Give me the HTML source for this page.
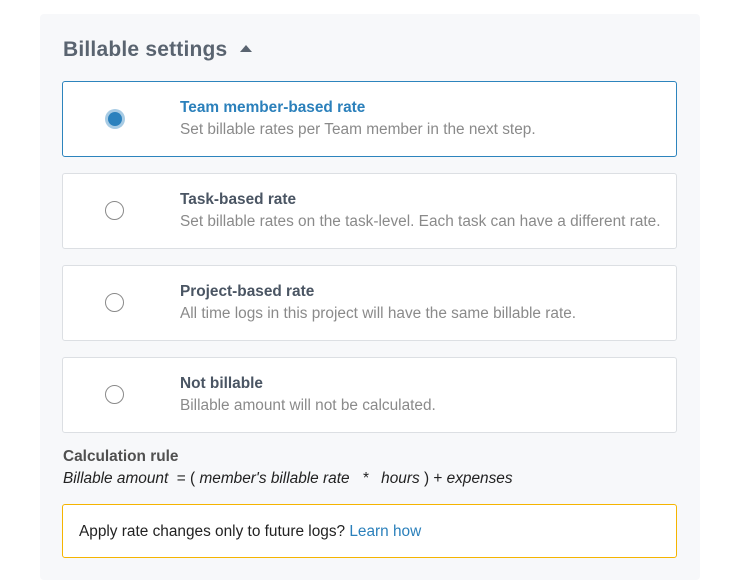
<!DOCTYPE html><html><head><style>
body{margin:0;width:756px;height:584px;background:#fff;font-family:"Liberation Sans",sans-serif;position:relative;overflow:hidden}
.panel{position:absolute;left:40px;top:14px;width:660px;height:566px;background:#f7f8fa;border-radius:4px}
h1{position:absolute;left:63px;top:38px;margin:0;font-size:21px;font-weight:bold;color:#5a6470;letter-spacing:.2px}
.tri{position:absolute;left:240px;top:45px;width:0;height:0;border-left:6px solid transparent;border-right:6px solid transparent;border-bottom:7px solid #5a6470}
.card{position:absolute;left:62px;width:613px;height:74px;background:#fff;border:1px solid #dcdfe3;border-radius:3px}
.card.sel{border-color:#2d84bd}
.radio{position:absolute;left:42px;top:27px;width:17px;height:17px;border:1.5px solid #8a8a8a;border-radius:50%}
.sel .radio{border:none;left:42px;top:27px;width:20px;height:20px;background:#a7cbe4}
.sel .radio::after{content:"";position:absolute;left:3px;top:3px;width:14px;height:14px;border-radius:50%;background:#2b81bd}
.t{position:absolute;left:117px;top:17px;font-size:15.4px;font-weight:bold;color:#4a5563}
.sel .t{color:#2b80bb}
.s{position:absolute;left:117px;top:39px;font-size:15.4px;color:#8a8a8a}
.cr{position:absolute;left:63px;top:448px;font-size:15.4px;font-weight:bold;color:#505050}
.f{position:absolute;left:63px;top:470px;font-size:15.4px;font-style:italic;color:#222;white-space:pre}
.f span{font-style:normal}
.warn{position:absolute;left:62px;top:504px;width:613px;height:52px;background:#fff;border:1px solid #f5b400;border-radius:3px}
.warn div{position:absolute;left:16px;top:18px;font-size:15.4px;color:#222}
.warn a{color:#2b80bb;text-decoration:none}
</style></head><body>
<div class="panel"></div>
<h1>Billable settings</h1><div class="tri"></div>
<div class="card sel" style="top:81px"><div class="radio"></div><div class="t">Team member-based rate</div><div class="s">Set billable rates per Team member in the next step.</div></div>
<div class="card" style="top:173px"><div class="radio"></div><div class="t">Task-based rate</div><div class="s">Set billable rates on the task-level. Each task can have a different rate.</div></div>
<div class="card" style="top:265px"><div class="radio"></div><div class="t">Project-based rate</div><div class="s">All time logs in this project will have the same billable rate.</div></div>
<div class="card" style="top:357px"><div class="radio"></div><div class="t">Not billable</div><div class="s">Billable amount will not be calculated.</div></div>
<div class="cr">Calculation rule</div>
<div class="f">Billable amount <span> = ( </span>member's billable rate   *   hours<span> ) + </span>expenses</div>
<div class="warn"><div>Apply rate changes only to future logs? <a>Learn how</a></div></div>
</body></html>
